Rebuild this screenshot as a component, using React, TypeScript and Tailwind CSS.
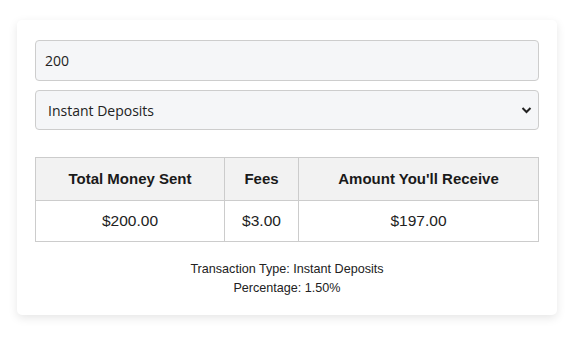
import { useState } from 'react';

const RATES: Record<string, number> = {
  'Instant Deposits': 0.015,
  'Standard Transfer': 0,
  'Credit Card': 0.03,
};

const fmt = (n: number) => `$${n.toFixed(2)}`;

const App = () => {
  const [amount, setAmount] = useState('200');
  const [type, setType] = useState('Instant Deposits');

  const sent = parseFloat(amount) || 0;
  const rate = RATES[type] ?? 0;
  const fees = sent * rate;

  return (
    <div className="min-h-[339px] w-[575px] bg-white pt-5" style={{ fontFamily: 'Arial, "Liberation Sans", sans-serif' }}>
      <div className="mx-[17px] w-[540px] rounded-[5px] bg-white px-[18px] pt-5 pb-[17px] shadow-[0_3px_10px_rgba(0,0,0,0.1)]">
        {/* Inputs */}
        <input
          type="text"
          value={amount}
          onChange={(e) => setAmount(e.target.value)}
          className="block h-[41px] w-full rounded-[4px] border border-[#cdcdcd] bg-[#f5f6f8] px-[9px] text-[14px] text-[#222] outline-none"
          style={{ fontFamily: '"Open Sans", "Noto Sans", sans-serif' }}
        />
        <div className="relative mt-[9px]">
          <select
            value={type}
            onChange={(e) => setType(e.target.value)}
            className="block h-[40px] w-full appearance-none rounded-[4px] border border-[#cdcdcd] bg-[#f5f6f8] px-[12px] text-[14px] text-[#222] outline-none"
            style={{ fontFamily: '"Open Sans", "Noto Sans", sans-serif' }}
          >
            {Object.keys(RATES).map((k) => (
              <option key={k}>{k}</option>
            ))}
          </select>
          <svg
            className="pointer-events-none absolute right-[7px] top-1/2 -translate-y-1/2"
            width="11"
            height="8"
            viewBox="0 0 11 8"
          >
            <path d="M1.5 2 L5.5 6 L9.5 2" fill="none" stroke="#222" strokeWidth="2" />
          </svg>
        </div>

        {/* Summary table */}
        <table className="mt-[27px] w-full border-collapse text-[#1a1a1a]">
          <thead>
            <tr className="bg-[#f2f2f2]">
              <th className="h-[43px] w-[189px] border border-[#cccccc] text-[15px] font-bold">Total Money Sent</th>
              <th className="h-[43px] w-[74px] border border-[#cccccc] text-[15px] font-bold">Fees</th>
              <th className="h-[43px] border border-[#cccccc] text-[15px] font-bold">Amount You'll Receive</th>
            </tr>
          </thead>
          <tbody>
            <tr>
              <td className="h-[41px] border border-[#cccccc] text-center text-[15.5px] text-[#222]">{fmt(sent)}</td>
              <td className="h-[41px] border border-[#cccccc] text-center text-[15.5px] text-[#222]">{fmt(fees)}</td>
              <td className="h-[41px] border border-[#cccccc] text-center text-[15.5px] text-[#222]">{fmt(sent - fees)}</td>
            </tr>
          </tbody>
        </table>

        <div className="mt-[18px] text-center text-[12.6px] leading-[19px] text-[#222]">
          <p>Transaction Type: {type}</p>
          <p>Percentage: {(rate * 100).toFixed(2)}%</p>
        </div>
      </div>
    </div>
  );
};

export default App;
